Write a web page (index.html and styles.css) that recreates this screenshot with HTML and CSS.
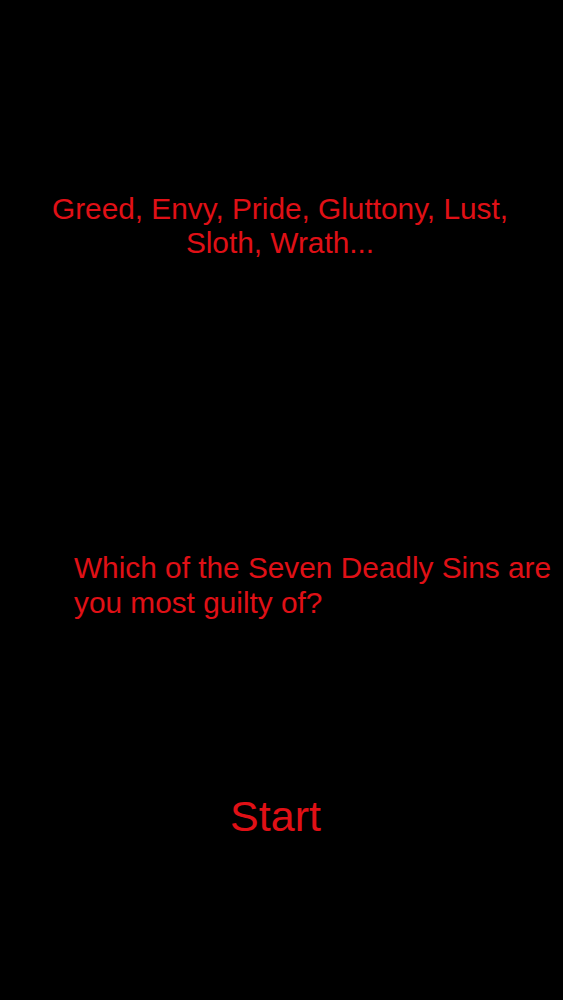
FILE: index.html
```html
<!DOCTYPE html>
<html>
<head>
<meta charset="utf-8">
<link rel="stylesheet" href="styles.css">
</head>
<body>
<main class="screen">
  <p class="intro">Greed, Envy, Pride, Gluttony, Lust, Sloth, Wrath...</p>
  <p class="question">Which of the Seven Deadly Sins are you most guilty of?</p>
  <div class="start">Start</div>
</main>
</body>
</html>
```
FILE: styles.css
```css
html, body {
  margin: 0;
  padding: 0;
  background: #000;
}
.screen {
  width: 563px;
  height: 1000px;
  background: #000;
  color: #e01016;
  font-family: "Liberation Sans", Arial, sans-serif;
  display: flex;
  flex-direction: column;
  overflow: hidden;
}
.intro {
  margin: 192px 0 0 0;
  padding: 0 24px 0 21px;
  font-size: 29.8px;
  line-height: 34px;
  text-align: center;
}
.question {
  margin: 290px 0 0 0;
  padding: 0 0 0 74px;
  font-size: 29.8px;
  line-height: 35px;
  text-align: left;
}
.start {
  margin-top: 172px;
  padding-right: 12px;
  font-size: 43px;
  line-height: 48px;
  text-align: center;
}
```
